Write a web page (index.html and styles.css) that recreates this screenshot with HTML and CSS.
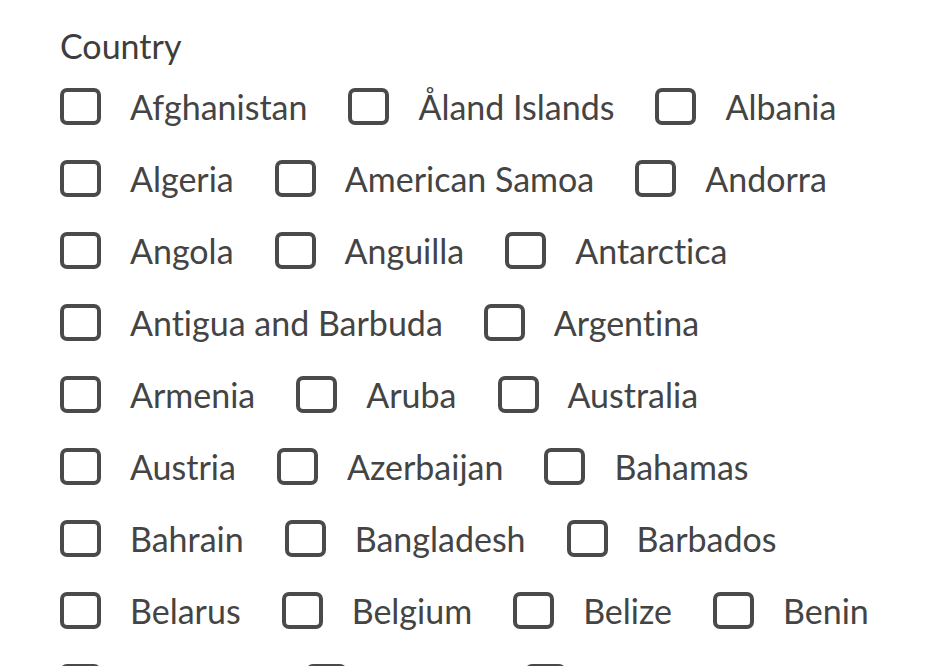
FILE: index.html
```html
<!DOCTYPE html>
<html lang="en">
<head>
    <meta charset="UTF-8">
    <title>Country</title>
    <link rel="stylesheet" href="styles.css">
</head>
<body>

<div class="field">
    <div class="field-label">Country</div>
    <div class="options">
        <label class="option"><input type="checkbox"><span class="box"></span>Afghanistan</label>
        <label class="option"><input type="checkbox"><span class="box"></span>Åland Islands</label>
        <label class="option"><input type="checkbox"><span class="box"></span>Albania</label>
        <label class="option"><input type="checkbox"><span class="box"></span>Algeria</label>
        <label class="option"><input type="checkbox"><span class="box"></span>American Samoa</label>
        <label class="option"><input type="checkbox"><span class="box"></span>Andorra</label>
        <label class="option"><input type="checkbox"><span class="box"></span>Angola</label>
        <label class="option"><input type="checkbox"><span class="box"></span>Anguilla</label>
        <label class="option"><input type="checkbox"><span class="box"></span>Antarctica</label>
        <label class="option"><input type="checkbox"><span class="box"></span>Antigua and Barbuda</label>
        <label class="option"><input type="checkbox"><span class="box"></span>Argentina</label>
        <label class="option"><input type="checkbox"><span class="box"></span>Armenia</label>
        <label class="option"><input type="checkbox"><span class="box"></span>Aruba</label>
        <label class="option"><input type="checkbox"><span class="box"></span>Australia</label>
        <label class="option"><input type="checkbox"><span class="box"></span>Austria</label>
        <label class="option"><input type="checkbox"><span class="box"></span>Azerbaijan</label>
        <label class="option"><input type="checkbox"><span class="box"></span>Bahamas</label>
        <label class="option"><input type="checkbox"><span class="box"></span>Bahrain</label>
        <label class="option"><input type="checkbox"><span class="box"></span>Bangladesh</label>
        <label class="option"><input type="checkbox"><span class="box"></span>Barbados</label>
        <label class="option"><input type="checkbox"><span class="box"></span>Belarus</label>
        <label class="option"><input type="checkbox"><span class="box"></span>Belgium</label>
        <label class="option"><input type="checkbox"><span class="box"></span>Belize</label>
        <label class="option"><input type="checkbox"><span class="box"></span>Benin</label>
        <label class="option"><input type="checkbox"><span class="box"></span>Bermuda</label>
        <label class="option"><input type="checkbox"><span class="box"></span>Bhutan</label>
        <label class="option"><input type="checkbox"><span class="box"></span>Bolivia</label>
        <label class="option"><input type="checkbox"><span class="box"></span>Bosnia and Herzegovina</label>
    </div>
</div>

</body>
</html>
```

FILE: styles.css
```css
body {
    font-family: 'Lato', 'Liberation Sans', sans-serif;
    font-variant-ligatures: none;
    margin: 0;
    padding: 0;
    background-color: #fff;
    color: #444;
}

.field {
    padding: 22px 60px 0 60px;
}

.field-label {
    font-size: 34px;
    line-height: 48px;
    color: #3d3d3d;
}

.options {
    display: flex;
    flex-wrap: wrap;
    column-gap: 41px;
}

.option {
    display: inline-flex;
    align-items: center;
    height: 72px;
    font-size: 34px;
    color: #444;
    cursor: pointer;
}

.option input {
    display: none;
}

.box {
    width: 33px;
    height: 29px;
    border: 4px solid #4a4a4a;
    border-radius: 7px;
    margin-right: 29px;
}
```
